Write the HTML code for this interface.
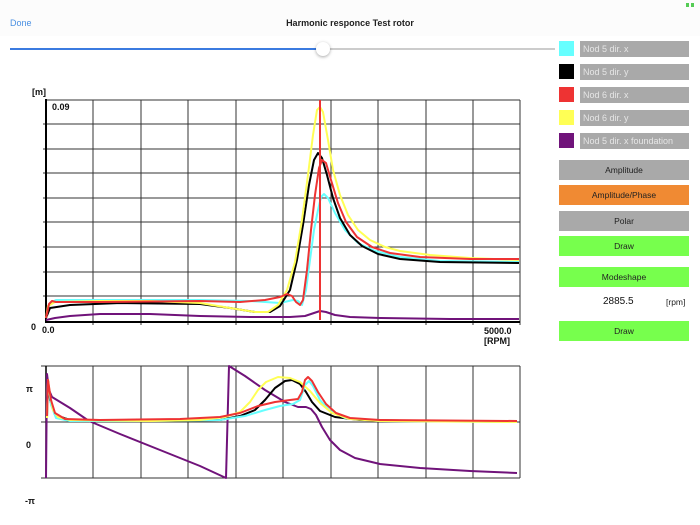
<!DOCTYPE html>
<html><head><meta charset="utf-8"><style>
body{margin:0;width:700px;height:525px;background:#fff;font-family:"Liberation Sans",sans-serif;position:relative;overflow:hidden}
.a{position:absolute}
.sw{position:absolute;left:559px;width:15px;height:15px}
.lb{position:absolute;left:580px;width:109px;height:16px;background:#a9a9a9;color:#e6e6e6;font-size:9px;line-height:16px;padding-left:3px;box-sizing:border-box}
.bt{position:absolute;left:559px;width:130px;height:20px;font-size:8.5px;line-height:20px;text-align:center;color:#222}
</style></head><body>
<div class="a" style="left:0;top:0;width:700px;height:36px;background:#fcfcfc"></div>
<div class="a" style="left:10px;top:18px;font-size:9px;color:#4a90e2">Done</div>
<div class="a" style="left:0;width:700px;top:18px;text-align:center;font-size:9px;font-weight:bold;color:#222">Harmonic responce Test rotor</div>
<div class="a" style="left:686px;top:3px;width:3px;height:4px;background:#5c5"></div>
<div class="a" style="left:691px;top:3px;width:3px;height:4px;background:#5c5"></div>
<div class="a" style="left:10px;top:48px;width:313px;height:2px;background:#3b7be0"></div>
<div class="a" style="left:323px;top:48px;width:232px;height:2px;background:#ccc"></div>
<div class="a" style="left:316px;top:42px;width:14px;height:14px;border-radius:50%;background:#fff;box-shadow:0 1px 3px rgba(0,0,0,.35)"></div>

<div class="sw" style="top:41px;background:#6ff"></div><div class="lb" style="top:41px">Nod 5 dir. x</div>
<div class="sw" style="top:64px;background:#000"></div><div class="lb" style="top:64px">Nod 5 dir. y</div>
<div class="sw" style="top:87px;background:#e33"></div><div class="lb" style="top:87px">Nod 6 dir. x</div>
<div class="sw" style="top:110px;background:#ff5"></div><div class="lb" style="top:110px">Nod 6 dir. y</div>
<div class="sw" style="top:133px;background:#70137a"></div><div class="lb" style="top:133px">Nod 5 dir. x foundation</div>
<div class="bt" style="top:160px;background:#a9a9a9">Amplitude</div>
<div class="bt" style="top:185px;background:#f08a33">Amplitude/Phase</div>
<div class="bt" style="top:211px;background:#a9a9a9">Polar</div>
<div class="bt" style="top:236px;background:#77ff4d">Draw</div>
<div class="bt" style="top:267px;background:#77ff4d">Modeshape</div>
<div class="a" style="left:603px;top:296px;font-size:10px;color:#111">2885.5</div>
<div class="a" style="left:666px;top:297px;font-size:8.5px;color:#222">[rpm]</div>
<div class="bt" style="top:321px;background:#77ff4d">Draw</div>

<svg class="a" style="left:0;top:0" width="540" height="525" viewBox="0 0 540 525" font-family="Liberation Sans, sans-serif">
<g stroke="#333" stroke-width="1" fill="none">
<path d="M46 100H520M46 124H520M46 149H520M46 173H520M46 198H520M46 222H520M46 247H520M46 272H520M46 296H520"/>
<path d="M93 100V325M141 100V325M188 100V325M236 100V325M283 100V325M331 100V325M378 100V325M426 100V325M473 100V325M520 100V325"/>
<path d="M43 124H46M43 149H46M43 173H46M43 198H46M43 222H46M43 247H46M43 272H46M43 296H46"/>
<path d="M46 366H520M46 422H520M46 478H520M41 366H46M41 422H46M41 478H46"/>
<path d="M93 366V478M141 366V478M188 366V478M236 366V478M283 366V478M331 366V478M378 366V478M426 366V478M473 366V478M520 366V478"/>
</g>
<path d="M46 99V322H520" stroke="#000" stroke-width="2" fill="none"/>
<path d="M46 366V478" stroke="#000" stroke-width="1.5"/>
<g fill="none" stroke-width="2" stroke-linejoin="round">
<polyline stroke="#70137a" points="46,320 55,318 70,316 100,314 150,314 200,316 250,317 290,317 305,316 314,313 320,311 326,312 335,315 350,317 380,318 450,319 519,319"/>
<polyline stroke="#6ff" points="46,318 50,303 56,300 120,300 200,300 250,301 280,303 293,300 298,301 302,305 306,290 310,260 314,230 318,210 321,197 324,194 328,198 335,213 345,230 358,243 375,251 400,257 440,261 519,262"/>
<polyline stroke="#000" points="46,318 50,308 70,305 120,303 200,304 230,308 255,312 270,312 280,306 290,290 297,260 303,225 309,185 314,160 318,153 322,158 327,175 333,198 340,218 350,235 362,246 378,254 400,259 440,262 519,263"/>
<polyline stroke="#ff5" points="46,318 48,306 55,302 100,301 150,301 200,303 230,308 255,312 268,312 278,305 287,290 295,262 302,220 308,175 313,135 317,110 320,107 323,112 328,140 333,170 340,195 348,215 358,230 370,240 385,247 400,251 430,255 470,258 519,260"/>
<polyline stroke="#e33" points="46,318 49,304 52,301 56,302 100,302 200,301 240,302 265,300 280,297 287,294 292,296 296,302 300,305 303,300 307,270 311,230 315,195 319,168 322,160 326,163 331,180 338,203 346,222 357,237 372,247 390,253 420,257 470,259 519,259"/>
<path stroke="#e33" d="M320 100V320"/>
<polyline stroke="#70137a" points="46,478 47,374 49,390 52,397 70,408 89,421 120,434 160,450 200,466 226,478 229,366 245,376 265,390 285,402 298,407 306,407 311,409 316,415 322,427 330,440 340,450 355,458 380,464 420,468 470,471 517,473"/>
<polyline stroke="#000" points="47,418 48,380 50,400 55,415 70,420 150,421 220,420 240,416 255,410 265,400 275,388 285,381 292,380 300,384 306,392 312,402 320,411 335,417 360,420 517,422"/>
<polyline stroke="#6ff" points="47,418 48,382 51,405 56,418 70,421 150,421 220,420 245,416 265,410 280,406 293,404 300,400 305,385 309,381 313,386 320,400 330,411 345,418 380,421 517,422"/>
<polyline stroke="#ff5" points="47,418 48,380 50,395 53,410 58,417 70,420 150,421 200,420 225,417 240,412 250,402 258,390 266,382 278,377 290,378 300,382 310,391 320,403 332,413 350,419 380,421 517,422"/>
<polyline stroke="#e33" points="47,416 48,380 51,400 55,413 65,419 100,420 180,419 220,417 240,413 258,406 275,402 290,400 298,399 302,392 305,380 308,377 312,381 318,392 326,404 336,413 350,418 380,420 517,421"/>
</g>
<g font-size="9" font-weight="bold" fill="#111">
<text x="32" y="95">[m]</text>
<text x="52" y="110">0.09</text>
<text x="31" y="330">0</text>
<text x="42" y="333">0.0</text>
<text x="484" y="334">5000.0</text>
<text x="484" y="344">[RPM]</text>
<text x="26" y="392">π</text>
<text x="26" y="448">0</text>
<text x="25" y="504">-π</text>
</g>
</svg>
</body></html>
